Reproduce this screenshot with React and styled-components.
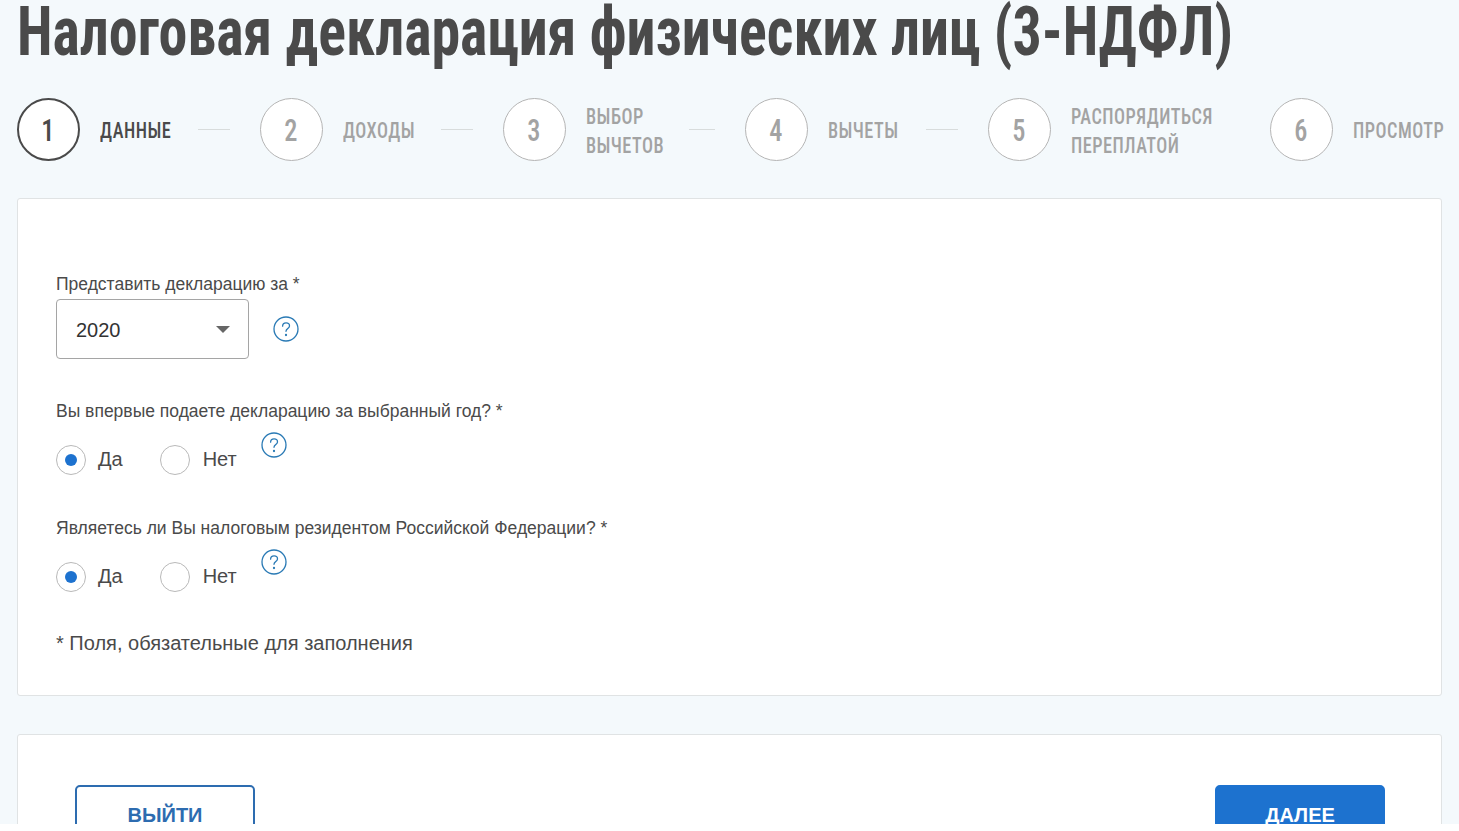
import React from "react";
import styled, { createGlobalStyle } from "styled-components";

const Global = createGlobalStyle`
  html, body { margin: 0; height: 100%; overflow: hidden; background: #fff; }
  body { font-family: "Liberation Sans", Arial, sans-serif; color: #4a4a4a; }
`;

const Page = styled.div`
  height: 824px;
  overflow: hidden;
  padding: 0 17px;
  box-sizing: border-box;
  background: #f4f9fc;
`;

const Title = styled.h1`
  margin: 0;
  height: 98px;
  font-family: "Roboto", sans-serif;
  font-stretch: 75%;
  font-size: 68px;
  font-weight: 700;
  line-height: 64px;
  white-space: nowrap;
  color: #4a4a4a;
  transform: scaleX(0.852);
  transform-origin: left top;
`;

const Steps = styled.div`
  display: flex;
  align-items: center;
  height: 63px;
  margin-bottom: 37px;
`;

const Step = styled.div`
  display: flex;
  align-items: center;
  width: ${(p) => p.$w}px;
`;

const Circle = styled.div`
  flex: none;
  width: 63px;
  height: 63px;
  box-sizing: border-box;
  border-radius: 50%;
  background: #fff;
  border: ${(p) => (p.$active ? "2px solid #4a4a4a" : "1px solid #b5b5b5")};
  color: ${(p) => (p.$active ? "#4a4a4a" : "#a3a3a3")};
  display: flex;
  align-items: center;
  justify-content: center;
  padding: 2px 1px 0 0;
  font-family: "Roboto", sans-serif;
  font-stretch: 75%;
  font-size: 31px;
  font-weight: 500;
`;

const Digit = styled.span`
  display: inline-block;
  transform: scaleX(0.85);
`;

const Caption = styled.div`
  flex: none;
  width: ${(p) => p.$w}px;
  margin: 2px 0 0 19.5px;
  font-family: "Roboto", sans-serif;
  font-stretch: 75%;
  font-size: 22px;
  font-weight: 500;
  line-height: 29px;
  letter-spacing: 0.6px;
  white-space: nowrap;
  color: ${(p) => (p.$active ? "#4a4a4a" : "#a3a3a3")};
  transform: scaleX(0.83);
  transform-origin: left center;
`;

const Connector = styled.div`
  flex: none;
  width: ${(p) => p.$w}px;
  height: 1px;
  margin-left: auto;
  margin-right: 30px;
  background: #d8dcdc;
`;

const Card = styled.section`
  box-sizing: border-box;
  width: 1425px;
  background: #fff;
  border: 1px solid #e0e3e4;
  border-radius: 3px;
`;

const FormCard = styled(Card)`
  height: 498px;
  margin-bottom: 38px;
  padding: 75px 38px 0;
`;

const Label = styled.div`
  font-size: 17.5px;
  line-height: 20px;
  color: #4a4a4a;
`;

const YearRow = styled.div`
  display: flex;
  align-items: center;
  gap: 24px;
  margin: 5px 0 42px;
`;

const YearSelect = styled.div`
  box-sizing: border-box;
  width: 193px;
  height: 60px;
  padding: 0 18px 0 19px;
  display: flex;
  align-items: center;
  justify-content: space-between;
  border: 1px solid #a5a5a5;
  border-radius: 4px;
  font-size: 20px;
  color: #333;
`;

const YearValue = styled.span`
  padding-top: 2px;
`;

const Caret = styled.span`
  width: 0;
  height: 0;
  border-left: 7px solid transparent;
  border-right: 7px solid transparent;
  border-top: 7px solid #666;
`;

const RadioRow = styled.div`
  display: flex;
  align-items: flex-start;
  height: 30px;
  margin: 24px 0 ${(p) => p.$after}px;
`;

const RadioItem = styled.div`
  display: flex;
  align-items: center;
  height: 30px;
  margin-right: ${(p) => p.$gap}px;
  font-size: 20px;
  color: #4a4a4a;
`;

const RadioText = styled.span`
  padding-bottom: 2px;
`;

const RadioCircle = styled.span`
  box-sizing: border-box;
  width: 30px;
  height: 30px;
  margin-right: ${(p) => (p.$on ? 12 : 13)}px;
  border: 1px solid #b9b9b9;
  border-radius: 50%;
  background: #fff;
  display: flex;
  align-items: center;
  justify-content: center;
  &::after {
    content: "";
    display: ${(p) => (p.$on ? "block" : "none")};
    width: 12px;
    height: 12px;
    border-radius: 50%;
    background: #1d72cf;
  }
`;

const HelpIcon = styled.svg`
  flex: none;
  width: 26px;
  height: 26px;
  margin-top: ${(p) => p.$top || 0}px;
`;

const Note = styled.div`
  font-size: 20px;
  line-height: 24px;
  color: #4a4a4a;
`;

const ActionsCard = styled(Card)`
  height: 200px;
  padding: 50px 56px 0 57px;
  display: flex;
  align-items: flex-start;
  justify-content: space-between;
`;

const Button = styled.button`
  box-sizing: border-box;
  height: 60px;
  width: ${(p) => p.$w}px;
  border-radius: 5px;
  border: 2px solid ${(p) => (p.$primary ? "#1d72cf" : "#2d6cb0")};
  background: ${(p) => (p.$primary ? "#1d72cf" : "#fff")};
  color: ${(p) => (p.$primary ? "#fff" : "#2d6cb0")};
  font-family: "Liberation Sans", Arial, sans-serif;
  font-size: 20px;
  font-weight: 700;
`;

const steps = [
  { n: 1, t: ["ДАННЫЕ"], w: 243, cw: 72, line: 32, active: true },
  { n: 2, t: ["ДОХОДЫ"], w: 243, cw: 72, line: 32 },
  { n: 3, t: ["ВЫБОР", "ВЫЧЕТОВ"], w: 242, cw: 79, line: 26 },
  { n: 4, t: ["ВЫЧЕТЫ"], w: 243, cw: 72, line: 32 },
  { n: 5, t: ["РАСПОРЯДИТЬСЯ", "ПЕРЕПЛАТОЙ"], w: 282, cw: 143 },
  { n: 6, t: ["ПРОСМОТР"], w: 172, cw: 89 },
];

function Help({ top }) {
  return (
    <HelpIcon $top={top} viewBox="0 0 26 26" fill="none" stroke="#2a7ab5" strokeWidth="1.3" strokeLinecap="round">
      <circle cx="13" cy="13" r="12" />
      <path d="M9.6 10.2c0-2 1.5-3.3 3.5-3.3s3.4 1.2 3.4 3c0 2.6-3.5 2.6-3.5 5.4" />
      <circle cx="13" cy="19" r="0.5" fill="#2a7ab5" />
    </HelpIcon>
  );
}

function YesNo({ after }) {
  return (
    <RadioRow $after={after}>
      <RadioItem $gap={37}>
        <RadioCircle $on />
        <RadioText>Да</RadioText>
      </RadioItem>
      <RadioItem $gap={24}>
        <RadioCircle />
        <RadioText>Нет</RadioText>
      </RadioItem>
      <Help top={-13} />
    </RadioRow>
  );
}

export default function App() {
  return (
    <Page>
      <Global />
      <Title>Налоговая декларация физических лиц (3-НДФЛ)</Title>
      <Steps>
        {steps.map((s) => (
          <Step key={s.n} $w={s.w}>
            <Circle $active={s.active}>
              <Digit>{s.n}</Digit>
            </Circle>
            <Caption $active={s.active} $w={s.cw}>
              {s.t.map((l) => (
                <div key={l}>{l}</div>
              ))}
            </Caption>
            {s.line && <Connector $w={s.line} />}
          </Step>
        ))}
      </Steps>
      <FormCard>
        <Label>Представить декларацию за *</Label>
        <YearRow>
          <YearSelect>
            <YearValue>2020</YearValue>
            <Caret />
          </YearSelect>
          <Help />
        </YearRow>
        <Label>Вы впервые подаете декларацию за выбранный год? *</Label>
        <YesNo after={43} />
        <Label>Являетесь ли Вы налоговым резидентом Российской Федерации? *</Label>
        <YesNo after={39} />
        <Note>* Поля, обязательные для заполнения</Note>
      </FormCard>
      <ActionsCard>
        <Button $w={180}>ВЫЙТИ</Button>
        <Button $w={170} $primary>
          ДАЛЕЕ
        </Button>
      </ActionsCard>
    </Page>
  );
}
